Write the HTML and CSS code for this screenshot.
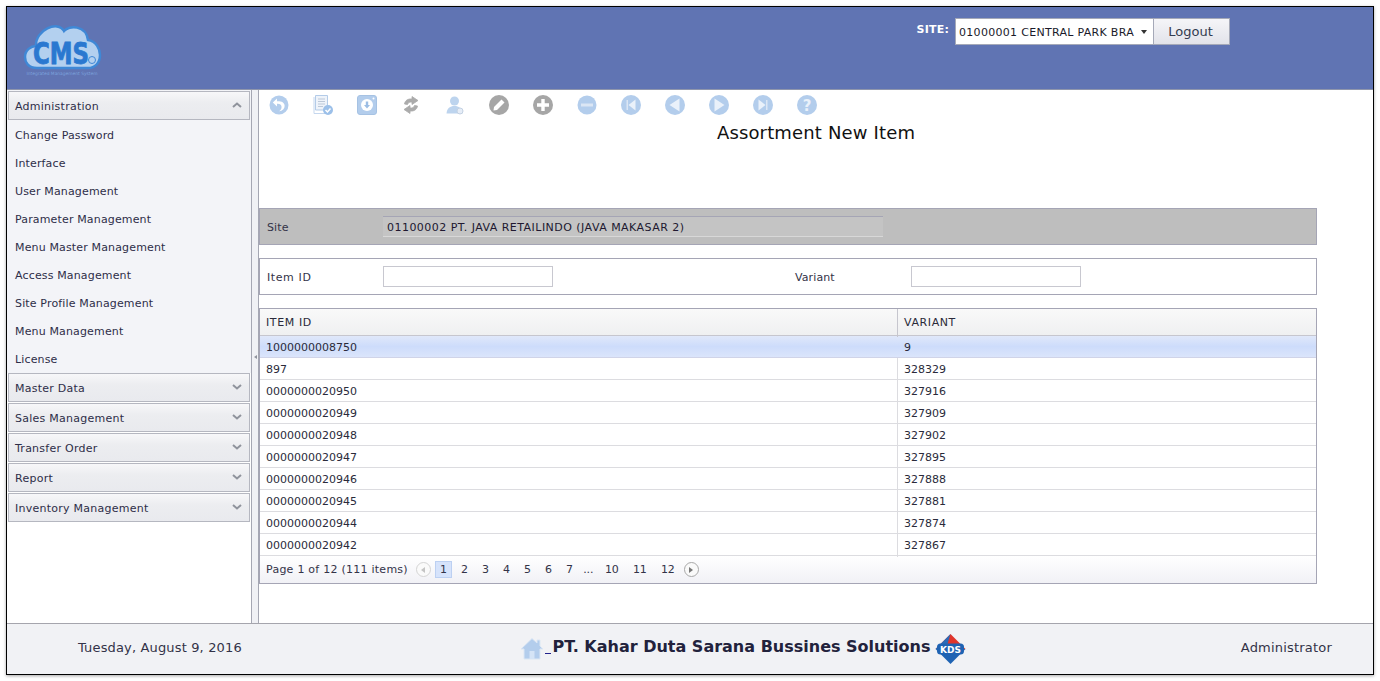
FILE: index.html
```html
<!DOCTYPE html>
<html lang="en">
<head>
    <meta charset="UTF-8">
    <title>Assortment New Item</title>
    <link rel="stylesheet" href="styles.css">
</head>
<body>
    <div class="frame">
        <header class="top">
            <div class="logo">
                <svg width="80" height="60" viewBox="0 0 80 60">
                    <path d="M14 46 C5 46 2 40 2 35 C2 28 8 24 13 24 C12 8 35 -2 41 9 C46 3 63 3 65 18 C73 19 77 27 77 33 C77 41 72 46 65 46 Z" fill="#b3d0ef" stroke="#3f88d6" stroke-width="2.5"/>
                    <text class="logo-text" transform="translate(38 42) scale(0.82 1)">CMS</text>
                    <circle cx="69" cy="38" r="3.5" fill="none" stroke="#3f88d6" stroke-width="1"/>
                    <text x="39" y="53" class="logo-small">Integrated Management System</text>
                </svg>
            </div>
            <div class="site-box">
                <label class="site-label">SITE:</label>
                <div class="site-select">
                    <span class="site-value">01000001 CENTRAL PARK BRA</span>
                    <span class="caret"></span>
                </div>
                <button class="logout">Logout</button>
            </div>
        </header>

        <div class="middle">
            <aside class="sidebar">
                <div class="panel-head">Administration
                    <svg class="chev" width="10" height="6" viewBox="0 0 10 6"><path d="M1 5 L5 1.5 L9 5" fill="none" stroke="#8f939c" stroke-width="2"/></svg>
                </div>
                <ul class="menu">
                    <li>Change Password</li>
                    <li>Interface</li>
                    <li>User Management</li>
                    <li>Parameter Management</li>
                    <li>Menu Master Management</li>
                    <li>Access Management</li>
                    <li>Site Profile Management</li>
                    <li>Menu Management</li>
                    <li>License</li>
                </ul>
                <div class="panel-head">Master Data
                    <svg class="chev" width="10" height="6" viewBox="0 0 10 6"><path d="M1 1 L5 4.5 L9 1" fill="none" stroke="#8f939c" stroke-width="2"/></svg>
                </div>
                <div class="panel-head">Sales Management
                    <svg class="chev" width="10" height="6" viewBox="0 0 10 6"><path d="M1 1 L5 4.5 L9 1" fill="none" stroke="#8f939c" stroke-width="2"/></svg>
                </div>
                <div class="panel-head">Transfer Order
                    <svg class="chev" width="10" height="6" viewBox="0 0 10 6"><path d="M1 1 L5 4.5 L9 1" fill="none" stroke="#8f939c" stroke-width="2"/></svg>
                </div>
                <div class="panel-head">Report
                    <svg class="chev" width="10" height="6" viewBox="0 0 10 6"><path d="M1 1 L5 4.5 L9 1" fill="none" stroke="#8f939c" stroke-width="2"/></svg>
                </div>
                <div class="panel-head">Inventory Management
                    <svg class="chev" width="10" height="6" viewBox="0 0 10 6"><path d="M1 1 L5 4.5 L9 1" fill="none" stroke="#8f939c" stroke-width="2"/></svg>
                </div>
            </aside>

            <div class="splitter"><span class="split-arrow"></span></div>

            <main class="content">
                <div class="toolbar">
                    <svg width="20" height="20" viewBox="0 0 20 20"><circle cx="10" cy="10" r="9.5" fill="#b3cdec"/><path d="M8 3.5 L3.8 7.5 L8 11.5 V8.8 C11 8.6 13 10 12.5 13 C12.2 14.6 11 15.8 10 16.3 C13.5 16 15.8 13.5 15.6 10.5 C15.4 7.5 12.5 6 8 6.2 Z" fill="#fff"/></svg>
                    <svg width="20" height="20" viewBox="0 0 20 20"><path d="M2.5 .5 H14.5 V15 H2.5 Z" fill="#eef3fa" stroke="#b3cbe8"/><path d="M5 4 H12 M5 6.5 H12 M5 9 H12 M5 11.5 H10" stroke="#bcc8d8"/><path d="M1 2 V18.5 H12" fill="none" stroke="#c5d7ee"/><circle cx="15" cy="15" r="5" fill="#9cc0e9"/><path d="M12.5 15 L14.5 17 L17.5 13.5" fill="none" stroke="#fff" stroke-width="1.5"/></svg>
                    <svg width="20" height="20" viewBox="0 0 20 20"><rect x=".5" y=".5" width="19" height="19" rx="2.5" fill="#b3cdec" stroke="#a6c2e3"/><circle cx="10" cy="10" r="6" fill="#fff"/><path d="M8.8 6.5 H11.2 V10 H13 L10 13.5 L7 10 H8.8 Z" fill="#9cbde4"/><circle cx="16.5" cy="3.5" r="1" fill="#fff"/></svg>
                    <svg width="20" height="20" viewBox="0 0 20 20"><path d="M3.5 9 C4 5.5 7 3.5 11 4 L11 1.5 L17 5.5 L11 9.5 L11 7 C8.5 6.8 7 7.5 6.5 9.5 Z M16.5 11 C16 14.5 13 16.5 9 16 L9 18.5 L3 14.5 L9 10.5 L9 13 C11.5 13.2 13 12.5 13.5 10.5 Z" fill="#ababab" stroke="#ababab" stroke-width="0.8"/></svg>
                    <svg width="20" height="20" viewBox="0 0 20 20"><circle cx="9.5" cy="6" r="4.5" fill="#bdd4ee"/><path d="M1.5 18.5 C2 13 5 11 9.5 11 C14 11 16.5 13 17.5 18.5 Z" fill="#bdd4ee"/><circle cx="15" cy="16" r="3" fill="#e6edf7" stroke="#c3d1e2"/></svg>
                    <svg width="20" height="20" viewBox="0 0 20 20"><circle cx="10" cy="10" r="10" fill="#a6a6a6"/><path d="M12.5 4.5 L15.5 7.5 L8 15 L4.5 15.5 L5 12 Z" fill="#fff"/></svg>
                    <svg width="20" height="20" viewBox="0 0 20 20"><circle cx="10" cy="10" r="10" fill="#a6a6a6"/><path d="M8.3 4 H11.7 V8.3 H16 V11.7 H11.7 V16 H8.3 V11.7 H4 V8.3 H8.3 Z" fill="#fff"/></svg>
                    <svg width="20" height="20" viewBox="0 0 20 20"><circle cx="10" cy="10" r="9.5" fill="#b3cdec"/><rect x="4" y="8.5" width="12" height="3" fill="#dbe6f4"/></svg>
                    <svg width="20" height="20" viewBox="0 0 20 20"><circle cx="10" cy="10" r="10" fill="#b3cdec"/><rect x="5.5" y="5" width="1.5" height="10" fill="#dbe6f4"/><path d="M14.5 4.5 V15.5 L7.5 10 Z" fill="#eaf1fa"/></svg>
                    <svg width="20" height="20" viewBox="0 0 20 20"><circle cx="10" cy="10" r="10" fill="#b3cdec"/><path d="M14.5 3.5 V16.5 L4.5 10 Z" fill="#eaf1fa"/></svg>
                    <svg width="20" height="20" viewBox="0 0 20 20"><circle cx="10" cy="10" r="10" fill="#b3cdec"/><path d="M5.5 3.5 V16.5 L15.5 10 Z" fill="#eaf1fa"/></svg>
                    <svg width="20" height="20" viewBox="0 0 20 20"><circle cx="10" cy="10" r="10" fill="#b3cdec"/><rect x="13" y="5" width="1.5" height="10" fill="#dbe6f4"/><path d="M5.5 4.5 V15.5 L12.5 10 Z" fill="#eaf1fa"/></svg>
                    <svg width="20" height="20" viewBox="0 0 20 20"><circle cx="10" cy="10" r="10" fill="#b3cdec"/><text x="10" y="15.5" class="help-mark">?</text></svg>
                </div>
                <h1 class="page-title">Assortment New Item</h1>

                <div class="form-bar grey">
                    <span class="field-label">Site</span>
                    <div class="readonly">01100002 PT. JAVA RETAILINDO (JAVA MAKASAR 2)</div>
                </div>
                <div class="form-bar">
                    <span class="field-label id-label">Item ID</span>
                    <input class="text-input" type="text">
                    <span class="field-label variant-label">Variant</span>
                    <input class="text-input" type="text">
                </div>

                <div class="grid">
                    <div class="grid-row grid-head">
                        <div class="cell">ITEM ID</div>
                        <div class="cell">VARIANT</div>
                    </div>
                    <div class="grid-row selected"><div class="cell">1000000008750</div><div class="cell">9</div></div>
                    <div class="grid-row"><div class="cell">897</div><div class="cell">328329</div></div>
                    <div class="grid-row"><div class="cell">0000000020950</div><div class="cell">327916</div></div>
                    <div class="grid-row"><div class="cell">0000000020949</div><div class="cell">327909</div></div>
                    <div class="grid-row"><div class="cell">0000000020948</div><div class="cell">327902</div></div>
                    <div class="grid-row"><div class="cell">0000000020947</div><div class="cell">327895</div></div>
                    <div class="grid-row"><div class="cell">0000000020946</div><div class="cell">327888</div></div>
                    <div class="grid-row"><div class="cell">0000000020945</div><div class="cell">327881</div></div>
                    <div class="grid-row"><div class="cell">0000000020944</div><div class="cell">327874</div></div>
                    <div class="grid-row"><div class="cell">0000000020942</div><div class="cell">327867</div></div>
                    <div class="pager">
                        <span class="pager-info">Page 1 of 12 (111 items)</span>
                        <span class="pager-btn off"><span class="tri-left"></span></span>
                        <span class="page current">1</span>
                        <span class="page">2</span>
                        <span class="page">3</span>
                        <span class="page">4</span>
                        <span class="page">5</span>
                        <span class="page">6</span>
                        <span class="page">7</span>
                        <span class="page dots">...</span>
                        <span class="page wide">10</span>
                        <span class="page wide">11</span>
                        <span class="page wide">12</span>
                        <span class="pager-btn"><span class="tri-right"></span></span>
                    </div>
                </div>
            </main>
        </div>

        <footer class="bottom">
            <div class="foot-date">Tuesday, August 9, 2016</div>
            <div class="foot-company">
                <svg width="24" height="24" viewBox="0 0 24 24"><path d="M12 1.5 L17 6 V3 H20 V9 L23 12 H20 V22 H4 V12 H1 Z" fill="#b3cdec" stroke="#dce7f4"/><rect x="9.5" y="14" width="5" height="8" fill="#d5e4f6"/></svg>
                <a class="foot-link"></a><span class="company-name">PT. Kahar Duta Sarana Bussines Solutions</span>
                <svg width="31" height="30" viewBox="0 0 31 30"><path d="M15.5 0 L30.5 15 H0.5 Z" fill="#e0352b"/><path d="M15.5 0 L0.5 15 H11 Z" fill="#2a6cb8"/><path d="M0.5 15 H30.5 L15.5 30 Z" fill="#1f63b3"/><rect x="2" y="9.5" width="27" height="11" rx="3.5" fill="#1f63b3"/><text x="15.5" y="19" class="kds">KDS</text></svg>
            </div>
            <div class="foot-user">Administrator</div>
        </footer>
    </div>
</body>
</html>
```

FILE: styles.css
```css
* {
    box-sizing: border-box;
}
html, body {
    height: 100%;
}
body {
    margin: 0;
    padding: 6px 6px 0;
    background: #fff;
    font-family: "DejaVu Sans", Verdana, sans-serif;
    font-size: 11px;
    color: #2a2a3a;
    overflow: hidden;
}
.frame {
    width: 1368px;
    height: 669px;
    border: 1px solid #000;
    box-shadow: 0 1px 3px rgba(0, 0, 0, 0.35);
    display: flex;
    flex-direction: column;
    background: #fff;
}

/* header */
.top {
    height: 83px;
    flex: none;
    background: #6074b3;
    border-bottom: 1px solid #8f96ac;
    display: flex;
    justify-content: space-between;
}
.logo {
    padding: 15px 0 0 16px;
}
.logo-text {
    font-size: 31px;
    font-weight: bold;
    font-stretch: condensed;
    fill: #2a78d0;
    stroke: #2a78d0;
    stroke-width: 0.8;
    text-anchor: middle;
}
.logo-small {
    font-size: 4.4px;
    fill: #7da3dd;
    text-anchor: middle;
}
.site-box {
    display: flex;
    align-items: flex-start;
    padding: 11px 143px 0 0;
}
.site-label {
    color: #fff;
    font-weight: bold;
    letter-spacing: 0.2px;
    margin: 5px 6px 0 0;
}
.site-select {
    width: 198px;
    height: 27px;
    background: #fff;
    border: 1px solid #a5a9b8;
    border-right: none;
    color: #1a1a2a;
    display: flex;
    align-items: center;
    padding: 1px 6px 0 3px;
    letter-spacing: 0.3px;
}
.site-value {
    width: 178px;
    white-space: nowrap;
}
.caret {
    margin-left: 7px;
    border-left: 3.5px solid transparent;
    border-right: 3.5px solid transparent;
    border-top: 4px solid #333;
}
.logout {
    width: 77px;
    height: 27px;
    border: 1px solid #a5a9b8;
    background: linear-gradient(#f5f5f8, #e2e3ea);
    font: 13px "DejaVu Sans", Verdana, sans-serif;
    color: #333c50;
    padding: 0 2px 0 0;
}

/* sidebar and splitter */
.middle {
    flex: 1;
    display: flex;
    min-height: 0;
}
.sidebar {
    width: 244px;
    flex: none;
    padding: 1px 0 0 1px;
    background: linear-gradient(#f3f4f8 0, #f3f4f8 283px, #fff 283px);
}
.panel-head {
    width: 242px;
    height: 29px;
    margin-bottom: 1px;
    border: 1px solid #b5b7c0;
    background: linear-gradient(#f7f7f9, #ecedf0 40%, #e9eaee);
    display: flex;
    align-items: center;
    justify-content: space-between;
    padding: 2px 7px 0 6px;
    color: #2e2e48;
    letter-spacing: 0.25px;
}
.chev {
    margin-top: -4px;
}
.menu {
    list-style: none;
    margin: 0;
    padding: 0 0 0 7px;
}
.menu li {
    height: 28px;
    line-height: 30px;
    letter-spacing: 0.15px;
    color: #2e2e48;
}
.splitter {
    width: 8px;
    flex: none;
    background: #f0f1f5;
    border-left: 1px solid #a5a7b3;
    border-right: 1px solid #a5a7b3;
    display: flex;
    align-items: center;
    justify-content: center;
}
.split-arrow {
    border-top: 2px solid transparent;
    border-bottom: 2px solid transparent;
    border-right: 3px solid #8f939c;
}

/* main area */
.content {
    flex: 1;
    min-width: 0;
}
.toolbar {
    display: flex;
    gap: 24px;
    height: 32px;
    padding: 5px 0 0 10px;
}
.toolbar svg {
    flex: none;
}
.help-mark {
    font-size: 15px;
    font-weight: bold;
    fill: #eaf1fa;
    text-anchor: middle;
}
.page-title {
    margin: 0 0 63px;
    height: 23px;
    line-height: 21px;
    font-size: 18px;
    font-weight: normal;
    letter-spacing: 0.15px;
    text-align: center;
    color: #111;
}
.form-bar {
    width: 1058px;
    height: 37px;
    margin-bottom: 13px;
    border: 1px solid #a5a5b5;
    display: flex;
    align-items: center;
    padding-left: 7px;
}
.form-bar.grey {
    background: #bebebe;
}
.field-label {
    width: 116px;
    flex: none;
    padding-top: 2px;
    letter-spacing: 0.1px;
    color: #333348;
}
.id-label {
    letter-spacing: 0.6px;
}
.variant-label {
    margin-left: 242px;
}
.readonly {
    width: 500px;
    height: 21px;
    line-height: 21px;
    border-top: 1px solid #a5a5b5;
    border-bottom: 1px solid #d8d8d8;
    background: #c4c4c4;
    padding-left: 4px;
    letter-spacing: 0.47px;
    color: #201830;
}
.text-input {
    width: 170px;
    height: 21px;
    border: 1px solid #c8c8d0;
    background: #fff;
    padding: 0 4px;
}

/* grid */
.grid {
    width: 1058px;
    border: 1px solid #a5a5b5;
}
.grid-row {
    display: grid;
    grid-template-columns: 638px 1fr;
    height: 22px;
    border-bottom: 1px solid #dcdce0;
    align-items: center;
}
.cell {
    height: 100%;
    line-height: 23px;
    padding-left: 6px;
    border-right: 1px solid #dcdce0;
    color: #2a2a3a;
}
.cell:last-child {
    border-right: none;
}
.grid-head {
    height: 27px;
    background: linear-gradient(#f9f9f9, #eff0f1);
    border-bottom-color: #c6c6ce;
    letter-spacing: 0.6px;
}
.grid-head .cell {
    line-height: 28px;
    border-right-color: #c6c6ce;
}
.selected {
    background: linear-gradient(#e0e8fa, #cddcfb 50%, #dbe5fb);
    border-bottom-color: #d0d4e8;
}
.selected .cell {
    border-right: none;
}
.pager {
    height: 27px;
    background: linear-gradient(#fff, #f1f1f6);
    display: flex;
    align-items: center;
    padding-left: 6px;
    color: #333348;
}
.pager-info {
    margin-right: 8px;
    letter-spacing: 0.25px;
}
.pager-btn {
    width: 15px;
    height: 15px;
    border-radius: 50%;
    border: 1px solid #a8a8a8;
    background: #fafafa;
    display: flex;
    align-items: center;
    justify-content: center;
    margin: 0 4px 0 0;
}
.pager-btn.off {
    border-color: #d4d4d4;
}
.tri-left {
    border-top: 3px solid transparent;
    border-bottom: 3px solid transparent;
    border-right: 4px solid #c4c4c4;
}
.tri-right {
    border-top: 3px solid transparent;
    border-bottom: 3px solid transparent;
    border-left: 4px solid #777;
}
.page {
    width: 17px;
    height: 17px;
    margin-right: 4px;
    line-height: 15px;
    text-align: center;
    border: 1px solid transparent;
}
.page.current {
    background: #d6e3fb;
    border-color: #bcd0f2;
}
.page.dots {
    width: 13px;
    margin-right: 5px;
}
.page.wide {
    width: 24px;
}

/* footer */
.bottom {
    height: 51px;
    flex: none;
    background: #f1f2f5;
    border-top: 1px solid #a5a5ad;
    display: grid;
    grid-template-columns: 1fr auto 1fr;
    align-items: center;
    padding-bottom: 4px;
    font-size: 13px;
    letter-spacing: 0.15px;
}
.foot-date {
    padding-left: 71px;
    color: #333348;
}
.foot-company {
    display: flex;
    align-items: center;
    font-size: 16px;
    font-weight: bold;
    letter-spacing: 0;
    color: #22223c;
    margin: 4px 0 0 106px;
}
.foot-link {
    width: 6px;
    margin: 0 1px 10px;
    border-bottom: 1px solid #22228c;
    align-self: flex-end;
}
.company-name {
    margin: 0 4px 5px 0;
}
.kds {
    font-size: 9px;
    font-weight: bold;
    fill: #fff;
    text-anchor: middle;
}
.foot-user {
    justify-self: end;
    padding-right: 41px;
    letter-spacing: 0.2px;
    color: #333348;
}
```
